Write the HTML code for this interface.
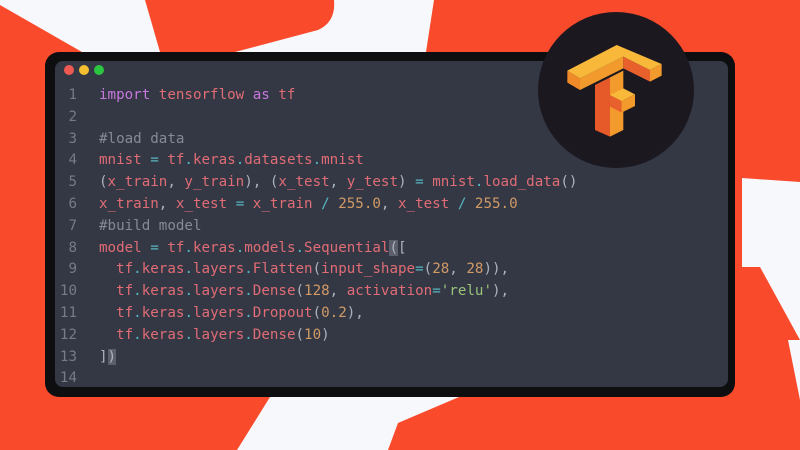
<!DOCTYPE html>
<html><head><style>
html,body{margin:0;padding:0}
body{width:800px;height:450px;overflow:hidden;position:relative;background:#f7f8fb;font-family:"DejaVu Sans Mono","Liberation Mono",monospace}
#bg{position:absolute;left:0;top:0}
.win{position:absolute;left:45px;top:52px;width:690px;height:345px;background:#0e0e10;border-radius:14px}
.panel{position:absolute;left:55px;top:61px;width:673px;height:326px;background:#343845;border-radius:8px;overflow:hidden}
.dot{position:absolute;top:65px;width:10px;height:10px;border-radius:50%}
.code{position:absolute;left:0;top:85px;font-size:14.2px;line-height:21.8px;color:#e06c75;white-space:pre}
.ln{display:inline-block;width:77px;text-align:right;color:#767b87;padding-right:22px}
.k{color:#c678dd}.o{color:#56b6c2}.n{color:#d19a66}.s{color:#98c379}.c{color:#858a95}.p{color:#abb2bf}
.sel{background:#5a5f6b}
</style></head><body>
<svg id="bg" width="800" height="450">
<rect width="800" height="450" fill="#fa4a2c"/>
<polygon points="8,0 145,0 160,52 82,52 0,5 0,0" fill="#f7f8fb"/>
<path d="M334,0 L434,0 L426,52 L235,52 L318,30 Q336,22 334,0Z" fill="#f7f8fb"/>
<polygon points="742,178 800,182 800,340 760,267 742,267" fill="#f7f8fb"/>
<polygon points="270,397 459,397 398,423 388,450 237,450" fill="#f7f8fb"/>
<polygon points="788,340 800,340 800,400" fill="#f7f8fb"/>
</svg>
<div class="win"></div>
<div class="panel"></div>
<div class="dot" style="left:64px;background:#ee5a52"></div>
<div class="dot" style="left:79px;background:#f5bd30"></div>
<div class="dot" style="left:94px;background:#2cc53f"></div>
<div class="code"><span class="ln">1</span><span class="k">import</span> tensorflow <span class="k">as</span> tf
<span class="ln">2</span>
<span class="ln">3</span><span class="c">#load data</span>
<span class="ln">4</span>mnist <span class="o">=</span> tf<span class="o">.</span>keras<span class="o">.</span>datasets<span class="o">.</span>mnist
<span class="ln">5</span><span class="p">(</span>x_train<span class="p">,</span> y_train<span class="p">),</span> <span class="p">(</span>x_test<span class="p">,</span> y_test<span class="p">)</span> <span class="o">=</span> mnist<span class="o">.</span>load_data<span class="p">()</span>
<span class="ln">6</span>x_train<span class="p">,</span> x_test <span class="o">=</span> x_train <span class="o">/</span> <span class="n">255.0</span><span class="p">,</span> x_test <span class="o">/</span> <span class="n">255.0</span>
<span class="ln">7</span><span class="c">#build model</span>
<span class="ln">8</span>model <span class="o">=</span> tf<span class="o">.</span>keras<span class="o">.</span>models<span class="o">.</span>Sequential<span class="p sel">(</span><span class="p">[</span>
<span class="ln">9</span>  tf<span class="o">.</span>keras<span class="o">.</span>layers<span class="o">.</span>Flatten<span class="p">(</span>input_shape<span class="o">=</span><span class="p">(</span><span class="n">28</span><span class="p">,</span> <span class="n">28</span><span class="p">)),</span>
<span class="ln">10</span>  tf<span class="o">.</span>keras<span class="o">.</span>layers<span class="o">.</span>Dense<span class="p">(</span><span class="n">128</span><span class="p">,</span> activation<span class="o">=</span><span class="s">'relu'</span><span class="p">),</span>
<span class="ln">11</span>  tf<span class="o">.</span>keras<span class="o">.</span>layers<span class="o">.</span>Dropout<span class="p">(</span><span class="n">0.2</span><span class="p">),</span>
<span class="ln">12</span>  tf<span class="o">.</span>keras<span class="o">.</span>layers<span class="o">.</span>Dense<span class="p">(</span><span class="n">10</span><span class="p">)</span>
<span class="ln">13</span><span class="p">]</span><span class="p sel">)</span>
<span class="ln">14</span></div>
<svg style="position:absolute;left:0;top:0" width="800" height="450">
<circle cx="616" cy="90" r="78" fill="#1b1820"/>
<g transform="translate(560,40) scale(0.3333)">
<polygon points="105,135 150,112 150,290 105,270" fill="#e65a2a"/>
<polygon points="150,112 190,92 190,270 150,290" fill="#f39a2c"/>
<polygon points="60,115 190,50 190,85 60,150" fill="#f39a2c"/>
<polygon points="22,92 60,115 60,150 22,128" fill="#f08a28"/>
<polygon points="190,50 270,90 270,125 190,85" fill="#e8612c"/>
<polygon points="270,90 305,72 305,107 270,125" fill="#f39a2c"/>
<polygon points="22,92 170,15 305,72 270,90 190,50 60,115" fill="#f8b83a"/>
<polygon points="150,165 190,145 225,163 185,183" fill="#f8b83a"/>
<polygon points="150,165 185,183 185,218 150,200" fill="#e8612c"/>
<polygon points="185,183 225,163 225,198 185,218" fill="#f39a2c"/>
</g>
</svg>
</body></html>
